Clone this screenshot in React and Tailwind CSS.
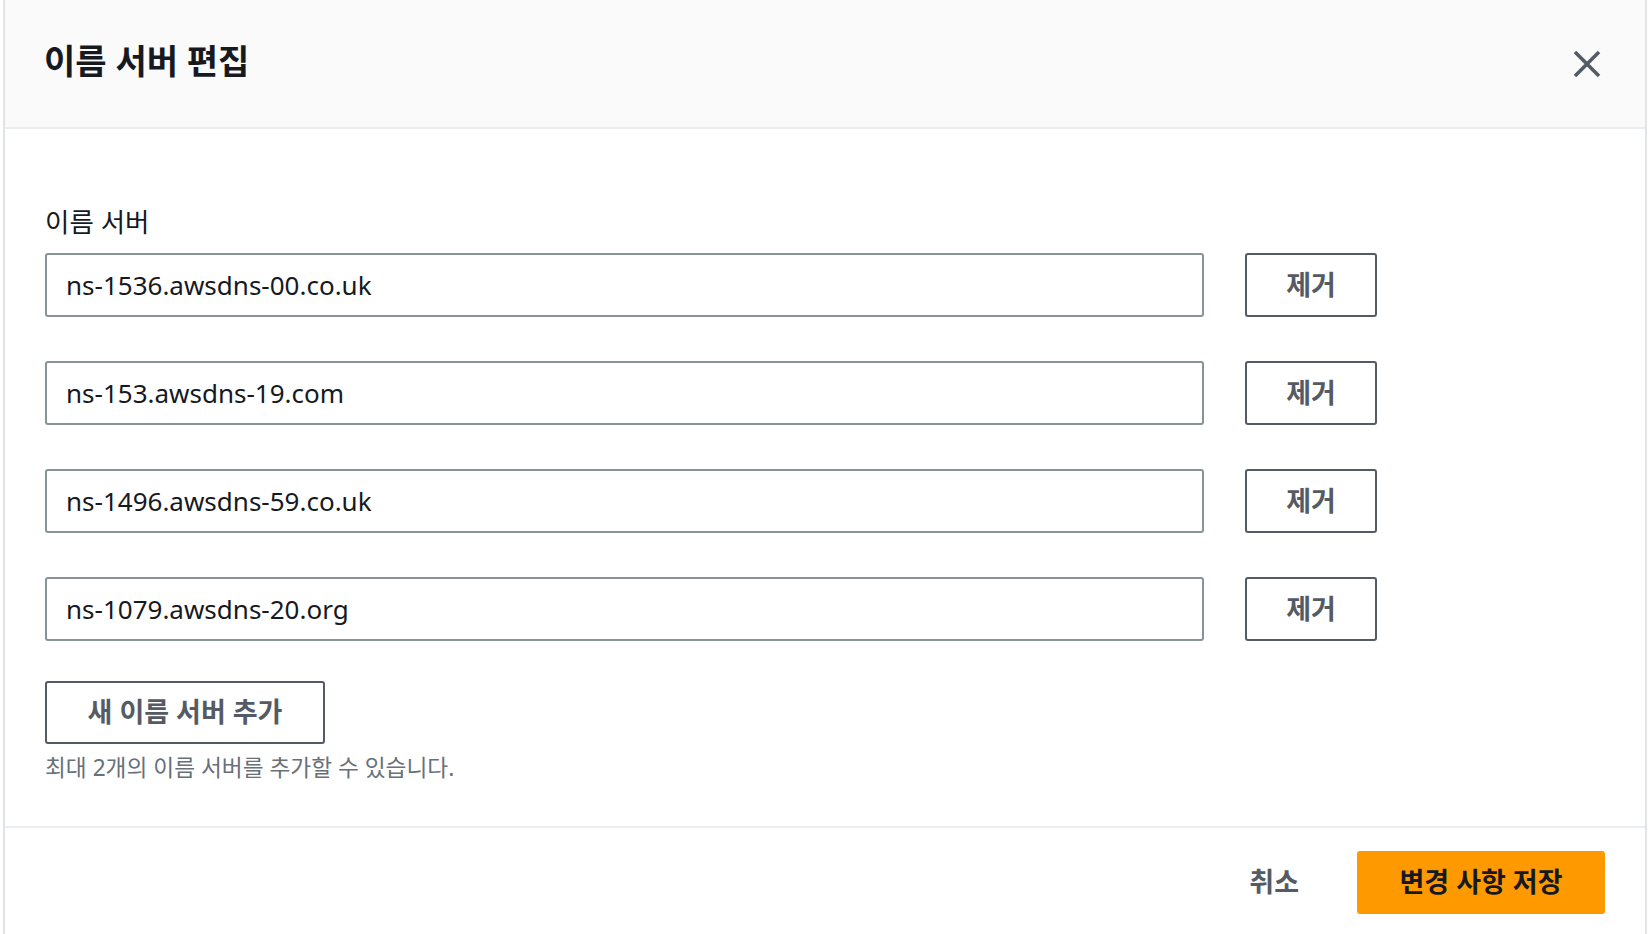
import React from 'react';

const servers = [
  'ns-1536.awsdns-00.co.uk',
  'ns-153.awsdns-19.com',
  'ns-1496.awsdns-59.co.uk',
  'ns-1079.awsdns-20.org',
];

const App = () => {
  return (
    <div
      className="h-[934px] w-full overflow-hidden bg-white pl-[3px] pr-[1px]"
      style={{ fontFamily: '"Noto Sans", "Noto Sans CJK KR", sans-serif' }}
    >
      <div className="flex h-full flex-col border-x-2 border-[#e1e4e6] bg-white">
        {/* Header */}
        <div className="flex h-[129px] shrink-0 items-center justify-between border-b-2 border-[#eaeded] bg-[#fafafa] pl-[39px] pr-[43px]">
          <h1 className="text-[34px] font-bold leading-none text-[#16191f] -mt-[6px]">이름 서버 편집</h1>
          <button className="flex h-[30px] w-[30px] items-center justify-center text-[#545b64]">
            <svg width="28" height="28" viewBox="0 0 28 28" fill="none">
              <path d="M2 2 L26 26 M26 2 L2 26" stroke="currentColor" strokeWidth="3.6" strokeLinecap="butt" />
            </svg>
          </button>
        </div>

        {/* Body */}
        <div className="flex-1 pl-[40px] pt-[78px]">
          <div className="text-[26.5px] leading-[30px] text-[#16191f]">이름 서버</div>
          <div className="mt-[16px] flex flex-col gap-[44px]">
            {servers.map((s) => (
              <div key={s} className="flex items-center gap-[41px]">
                <div className="flex h-[64px] w-[1159px] items-center rounded-[3px] border-2 border-[#879596] px-[19px] text-[26px] text-[#16191f]">
                  {s}
                </div>
                <button className="h-[64px] w-[132px] rounded-[3px] border-2 border-[#545b64] text-[27px] font-bold text-[#545b64]">
                  제거
                </button>
              </div>
            ))}
          </div>
          <button className="mt-[40px] h-[63px] w-[280px] rounded-[3px] border-2 border-[#545b64] text-[27px] font-bold text-[#545b64]">
            새 이름 서버 추가
          </button>
          <p className="mt-[10px] text-[22.7px] leading-[28px] text-[#687078]">최대 2개의 이름 서버를 추가할 수 있습니다.</p>
        </div>

        {/* Footer */}
        <div className="flex h-[108px] shrink-0 items-start justify-end border-t-2 border-[#eaeded] pr-[40px] pt-[23px]">
          <button className="mr-[58px] h-[63px] text-[27px] font-bold text-[#545b64]">취소</button>
          <button className="h-[63px] w-[248px] rounded-[3px] bg-[#ff9900] text-[27px] font-bold text-[#16191f]">
            변경 사항 저장
          </button>
        </div>
      </div>
    </div>
  );
};

export default App;
